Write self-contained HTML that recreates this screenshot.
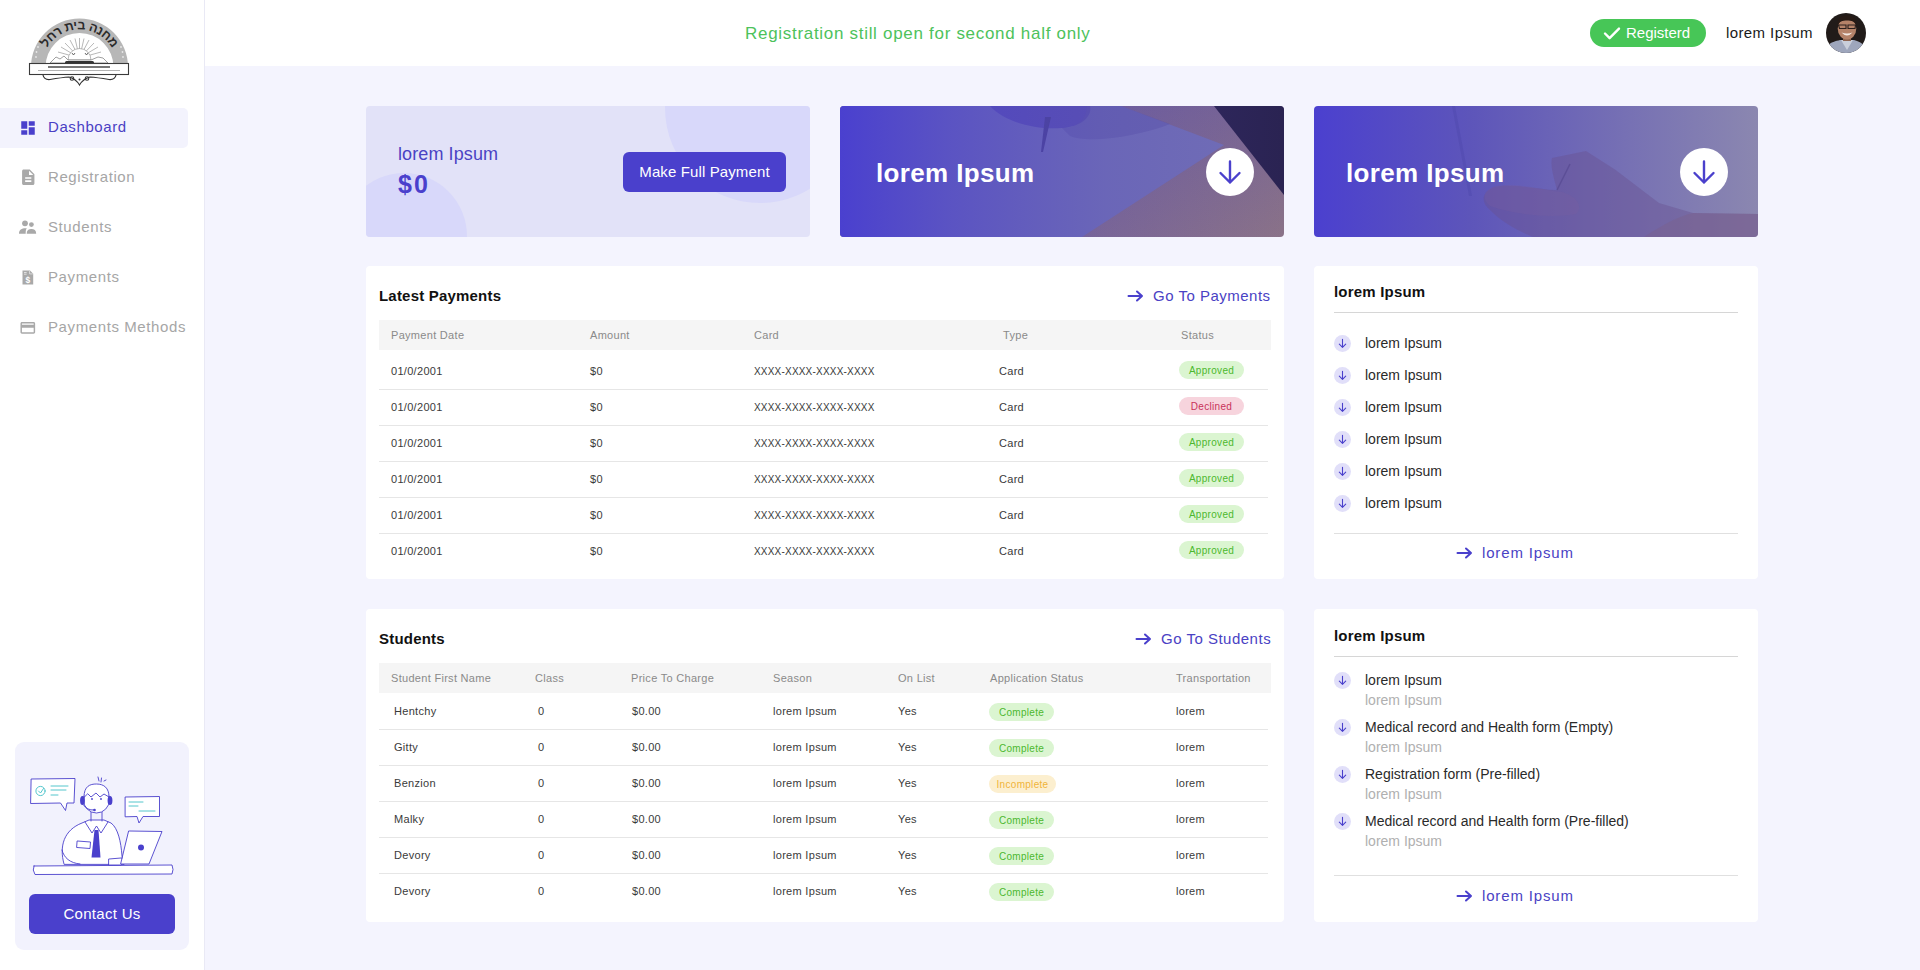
<!DOCTYPE html>
<html><head><meta charset="utf-8">
<style>
*{margin:0;padding:0;box-sizing:border-box}
html,body{width:1920px;height:970px;overflow:hidden}
body{background:#f4f4fe;font-family:"Liberation Sans",sans-serif;position:relative;color:#333}
.a{position:absolute}
.t{position:absolute;white-space:nowrap;line-height:20px;height:20px}
#side{left:0;top:0;width:205px;height:970px;background:#fff;border-right:1px solid #e9e9f5}
#hdr{left:205px;top:0;width:1715px;height:66px;background:#fff}
.nav{left:48px;font-size:15px;color:#a6a6a6;letter-spacing:.6px}
.card{position:absolute;background:#fff;border-radius:4px}
.th{position:absolute;background:#f5f5f5}
.hd{font-size:11px;color:#8a8a8a;letter-spacing:.3px}
.td{font-size:11px;color:#3a3a3a;letter-spacing:.3px}
.dv{position:absolute;height:1px;background:#e6e6e6}
.bdg{position:absolute;height:18px;border-radius:9px;font-size:10px;line-height:20px;text-align:center;letter-spacing:.3px}
.ok{background:#dbf5d1;color:#4cb82e}
.no{background:#f7d4dd;color:#c8325a}
.inc{background:#fcefcf;color:#f0b43a}
.ttl{font-size:15px;font-weight:700;color:#111;letter-spacing:.2px}
.lnk{font-size:15px;color:#4a42c4;letter-spacing:.5px}
.li{font-size:14px;color:#2a2a2a}
.sub{font-size:14px;color:#b0b0b0}
.ic{position:absolute;width:17px;height:17px;border-radius:50%;background:#e1dff9}
</style></head><body>

<div id="side" class="a"></div>
<div id="hdr" class="a"></div>

<!-- logo -->
<svg class="a" style="left:0;top:0" width="205" height="100" viewBox="0 0 205 100">
  <defs><path id="arcp" d="M41.5 67.5 A38 38 0 0 1 117.5 67.5"/></defs>
  <path d="M31 67 A48.5 48.5 0 0 1 128 67 L113.5 67 A34 34 0 0 0 45.5 67 Z" fill="#b7b7b7"/>
  <g fill="#e8e8e8"><circle cx="38" cy="47" r=".9"/><circle cx="36.5" cy="52" r=".9"/><circle cx="36" cy="57" r=".9"/><circle cx="121" cy="47" r=".9"/><circle cx="122.5" cy="52" r=".9"/><circle cx="123" cy="57" r=".9"/></g>
  <g stroke="#9a9a9a" stroke-width=".7">
    <line x1="79.5" y1="58" x2="79.5" y2="38"/><line x1="79.5" y1="58" x2="75" y2="38.5"/><line x1="79.5" y1="58" x2="84" y2="38.5"/><line x1="79.5" y1="58" x2="70" y2="40"/><line x1="79.5" y1="58" x2="89" y2="40"/>
    <line x1="79.5" y1="58" x2="65" y2="43"/><line x1="79.5" y1="58" x2="94" y2="43"/><line x1="79.5" y1="58" x2="61" y2="47"/><line x1="79.5" y1="58" x2="98" y2="47"/><line x1="79.5" y1="58" x2="58" y2="52"/><line x1="79.5" y1="58" x2="101" y2="52"/>
  </g>
  <path d="M68 60 A11.5 11.5 0 0 1 91 60 Z" fill="#fff" stroke="#888" stroke-width=".6"/>
  <path d="M50 63 L56 57 L60 59 L64 56 L68 60 L91 60 L98 57 L103 58 L108 63 Z" fill="#fff" stroke="#777" stroke-width=".7"/>
  <path d="M72 53 l1.5 2 l1.5 -2 M85 53 l1.5 2 l1.5 -2" stroke="#444" stroke-width=".8" fill="none"/>
  <rect x="65" y="61" width="29" height="3.5" rx="1.5" fill="#333"/>
  <text font-family="Liberation Sans" font-weight="700" font-size="12.5" letter-spacing="-.3" fill="#2b2b2b" direction="rtl"><textPath href="#arcp" startOffset="50%" text-anchor="middle">מחנה בית רחל</textPath></text>
  <rect x="29.5" y="63.5" width="99" height="11" fill="#fff" stroke="#3a3a3a" stroke-width="1.1"/>
  <rect x="48" y="66.2" width="62" height="1.6" fill="#555"/>
  <rect x="38" y="70" width="82" height=".9" fill="#aaa"/>
  <path d="M43 75 Q44 80 50 79.5 Q62 77.5 69 77 Q76 79 79.5 85 Q83 79 90 77 Q97 77.5 109 79.5 Q115 80 116 75" fill="none" stroke="#333" stroke-width="1.2"/>
  <circle cx="72" cy="78.5" r="1.8" fill="none" stroke="#333" stroke-width="1.1"/><circle cx="87" cy="78.5" r="1.8" fill="none" stroke="#333" stroke-width="1.1"/>
  <circle cx="79.5" cy="79.5" r="1" fill="#333"/>
</svg>

<!-- nav -->
<div class="a" style="left:0;top:108px;width:188px;height:40px;background:#f3f3fd;border-radius:0 5px 5px 0"></div>
<svg class="a" style="left:18.75px;top:118.75px" width="18" height="18" viewBox="0 0 24 24"><path fill="#4a40cc" d="M3 13h8V3H3v10zm0 8h8v-6H3v6zm10 0h8V11h-8v10zm0-18v6h8V3h-8z"/></svg>
<svg class="a" style="left:18.9px;top:167.8px" width="18.5" height="18.5" viewBox="0 0 24 24"><path fill="#a9a9a9" d="M14 2H6c-1.1 0-1.99.9-1.99 2L4 20c0 1.1.89 2 1.99 2H18c1.1 0 2-.9 2-2V8l-6-6zm2 16H8v-2h8v2zm0-4H8v-2h8v2zm-3-5V3.5L18.5 9H13z"/></svg>
<svg class="a" style="left:19px;top:219px" width="18" height="16" viewBox="0 0 18 16"><circle cx="6" cy="4.3" r="2.9" fill="#a9a9a9"/><circle cx="12.4" cy="5.6" r="2.4" fill="#a9a9a9"/><path d="M0 14.7 C0 11 2.5 9.3 6.8 9.3 L7.8 9.3 C6.8 10.6 6.7 12.5 6.7 14.7 Z" fill="#a9a9a9"/><path d="M7.7 14.7 C7.7 11.5 9.6 10.1 12.4 10.1 C15.2 10.1 17.2 11.5 17.2 14.7 Z" fill="#a9a9a9"/></svg>
<svg class="a" style="left:22px;top:269.5px" width="12" height="15" viewBox="0 0 12 15"><path d="M0.5 0.5 H8 L11.2 3.7 V14.5 H0.5 Z" fill="#a9a9a9"/><rect x="2" y="2" width="2.6" height="0.9" fill="#e6e6e6"/><rect x="2" y="3.7" width="2.6" height="0.9" fill="#e6e6e6"/><path d="M7.6 0.8 V3.9 H10.9" fill="none" stroke="#e6e6e6" stroke-width=".8"/><text x="5.8" y="12.6" font-family="Liberation Sans" font-weight="700" font-size="8.5" fill="#fff" text-anchor="middle">$</text></svg>
<svg class="a" style="left:18.5px;top:318.8px" width="17.6" height="17.6" viewBox="0 0 24 24"><path fill="#a9a9a9" d="M20 4H4c-1.11 0-1.99.89-1.99 2L2 18c0 1.11.89 2 2 2h16c1.11 0 2-.89 2-2V6c0-1.11-.89-2-2-2zm0 14H4v-6h16v6zm0-10H4V6h16v2z"/></svg>
<div class="t nav" style="top:117px;color:#4a40c4">Dashboard</div>
<div class="t nav" style="top:167px">Registration</div>
<div class="t nav" style="top:217px">Students</div>
<div class="t nav" style="top:267px">Payments</div>
<div class="t nav" style="top:317px">Payments Methods</div>

<!-- contact -->
<div class="a" style="left:15px;top:742px;width:174px;height:208px;background:#f2f2fd;border-radius:9px"></div>
<svg class="a" style="left:15px;top:742px" width="174" height="150" viewBox="15 742 174 150">
  <g fill="none" stroke="#4a40cc" stroke-width=".9" stroke-linejoin="round" stroke-linecap="round">
    <path d="M31.5 779 L75 778.5 L74 803 L67 803 L65.5 810.5 L60.5 803 L31 803.5 Z" fill="#fff"/>
    <path d="M125.5 797 L159.5 796.5 L159.5 816.5 L143 816.5 L139 823 L137 816.5 L125.5 816.8 Z" fill="#fff"/>
    <path d="M34 866 L172 865 Q174 869.5 172 874 L35 874.5 Q32 870 34 866 Z" fill="#fff"/>
    <path d="M64 864 C59 846 64 830 82 823 L89 820 L104 820 L111 823 C118 828 121 842 122 856 L124 864 Z" fill="#fff"/><path d="M91 811 L91 821 M102 811 L102 821"/>
    <path d="M85 822 L92 833 L96.5 826 L101 833 L108 822" fill="#fff"/>
    <path d="M77.5 841 L90.5 842 L90 848.5 L77 847.5 Z" fill="#fff"/><path d="M62 850 C64 858 70 863 80 864"/>
    <path d="M109 859 L121 858 C124 858 125 863 121 865 L109 865 Z" fill="#fff"/>
    <path d="M129 831 L162 831.5 L149 864 L121 864 Z" fill="#fff"/>
    <circle cx="96.5" cy="800" r="13" fill="#fff"/>
    <path d="M84 797 C84 786 90 784 96.5 784 C104 784 109 788 109 797 L104 794 L100 797 L96 793 L91 797 L88 794 Z" fill="#fff"/>
    <path d="M83.5 805 Q87 810.5 94 810"/>
    <line x1="98" y1="777" x2="99" y2="781"/><line x1="101.5" y1="778" x2="101" y2="782"/><line x1="104" y1="781" x2="106" y2="780"/>
  </g>
  <g stroke="#42c0c6" stroke-width=".9" fill="none" stroke-linecap="round">
    <circle cx="40.5" cy="791" r="4.6"/><path d="M38.5 791 L40.5 793 L43.5 788.5"/>
    <line x1="51" y1="786" x2="68" y2="786"/><line x1="51" y1="790" x2="66" y2="790"/><line x1="51" y1="795" x2="58" y2="795"/>
    <line x1="129" y1="802" x2="143" y2="802"/><line x1="129" y1="806" x2="138" y2="806"/><line x1="139" y1="811" x2="155" y2="811"/>
  </g>
  <path d="M94.5 830 L98.5 830 L100.5 857.5 L91.5 857.5 Z" fill="#4a40cc"/>
  <ellipse cx="82.5" cy="800.5" rx="2.4" ry="4.5" fill="#4a40cc"/><ellipse cx="110" cy="800.5" rx="2.4" ry="4.5" fill="#4a40cc"/>
  <circle cx="141" cy="847.5" r="3" fill="#4a40cc"/><circle cx="94.5" cy="810" r="1.3" fill="#4a40cc"/>
  <circle cx="92" cy="799" r=".9" fill="#4a40cc"/><circle cx="101" cy="799" r=".9" fill="#4a40cc"/>
</svg>
<div class="a" style="left:29px;top:894px;width:146px;height:40px;background:#4a40cc;border-radius:6px;color:#fff;font-size:15px;line-height:40px;text-align:center;letter-spacing:.3px">Contact Us</div>

<!-- header -->
<div class="t" style="left:745px;top:24px;font-size:17px;color:#4dc25b;letter-spacing:.7px">Registration still open for second half only</div>
<div class="a" style="left:1590px;top:19px;width:116px;height:28px;border-radius:14px;background:#47c657"></div>
<svg class="a" style="left:1603px;top:26px" width="18" height="15" viewBox="0 0 18 15"><path d="M2 7.5 L6.6 12.2 L16 2.6" fill="none" stroke="#fff" stroke-width="2.4" stroke-linecap="round" stroke-linejoin="round"/></svg>
<div class="t" style="left:1626px;top:23px;font-size:15px;color:#fff">Registerd</div>
<div class="t" style="left:1726px;top:23px;font-size:15px;color:#1a1a1a;letter-spacing:.4px">lorem Ipsum</div>
<svg class="a" style="left:1826px;top:13px" width="40" height="40" viewBox="0 0 40 40">
  <defs><clipPath id="av"><circle cx="20" cy="20" r="20"/></clipPath></defs>
  <g clip-path="url(#av)">
    <rect width="40" height="40" fill="#211b19"/>
    <path d="M0 40 L1 33 C5 29 10 28 14 27 L28 27 C32 28 36 30 39 33 L40 40 Z" fill="#9ea6bc"/>
    <path d="M15 27 L21 37 L27 27 Z" fill="#c9ceda"/>
    <rect x="17" y="21" width="8" height="7" fill="#8e6450"/>
    <ellipse cx="21" cy="15.5" rx="9.3" ry="11" fill="#b48268"/>
    <path d="M11.5 13 C11 5 15 2.5 21 2.5 C27 2.5 31 5 30.5 13 C29 8.5 25.5 7.5 21 7.5 C16.5 7.5 13 8.5 11.5 13 Z" fill="#261a15"/>
    <path d="M12.5 12 H20 V15.5 H13.5 Z M22 12 H29.5 L29 15.5 H22 Z" fill="none" stroke="#2a1f1c" stroke-width="1.1"/>
    <path d="M15.5 19.5 Q21 25.5 26.5 19.5 Q21 21.5 15.5 19.5 Z" fill="#f2e8e2"/>
  </g>
</svg>

<!-- top cards -->
<div class="a" style="left:366px;top:106px;width:444px;height:131px;background:#e2e2f8;border-radius:4px;overflow:hidden">
  <div class="a" style="left:-25px;top:67px;width:126px;height:126px;border-radius:50%;background:#d8d8fa"></div>
  <div class="a" style="left:299px;top:-93px;width:190px;height:190px;border-radius:50%;background:#d8d8fa"></div>
</div>
<div class="t" style="left:398px;top:144px;font-size:18px;color:#4a42c4;letter-spacing:.1px">lorem Ipsum</div>
<div class="t" style="left:398px;top:172px;font-size:25px;line-height:24px;height:24px;font-weight:700;color:#4a40cc;letter-spacing:2px">$0</div>
<div class="a" style="left:623px;top:152px;width:163px;height:40px;background:#4a40cc;border-radius:6px;color:#fff;font-size:15px;line-height:40px;text-align:center;letter-spacing:.12px">Make Full Payment</div>

<div class="a" style="left:840px;top:106px;width:444px;height:131px;border-radius:4px;overflow:hidden">
<svg width="444" height="131" viewBox="0 0 444 131" style="display:block">
  <defs>
    <linearGradient id="gB" x1="0" x2="1" y1="0" y2="0"><stop offset="0" stop-color="#4a40cf" stop-opacity="1"/><stop offset=".25" stop-color="#4c42cc" stop-opacity=".6"/><stop offset=".6" stop-color="#5046c4" stop-opacity=".2"/><stop offset="1" stop-color="#5548c0" stop-opacity="0"/></linearGradient>
    <linearGradient id="tB" x1="0" x2="1" y1="0" y2="1"><stop offset="0" stop-color="#6a5a9c"/><stop offset="1" stop-color="#8a7288"/></linearGradient>
  </defs>
  <rect width="444" height="131" fill="url(#tB)"/>
  <path d="M0 0 H281 L384 39 L242 131 H0 Z" fill="#716eb5"/>
  <path d="M374 0 H444 V89 Z" fill="#2a2352"/>
  <path d="M150 0 C165 16 195 24 222 22 C245 20 252 8 250 0 Z" fill="#5a50b0"/><path d="M222 22 C240 22 248 10 246 0 L281 0 L330 18 C300 30 250 38 230 30 Z" fill="#5d55a8" opacity=".5"/>
  <path d="M205 11 L211 11 L203 46 L201 46 Z" fill="#4a4290"/>
  <rect width="444" height="131" fill="url(#gB)"/>
</svg></div>
<div class="t" style="left:876px;top:158px;font-size:26px;line-height:30px;height:30px;font-weight:700;color:#fff;letter-spacing:.35px">lorem Ipsum</div>
<svg class="a" style="left:1206px;top:148px" width="48" height="48" viewBox="0 0 48 48"><circle cx="24" cy="24" r="24" fill="#fff"/><path d="M24 13.5 V34.5 M14.5 25 L24 34.5 L33.5 25" fill="none" stroke="#4a40cc" stroke-width="2.4" stroke-linecap="round" stroke-linejoin="round"/></svg>

<div class="a" style="left:1314px;top:106px;width:444px;height:131px;border-radius:4px;overflow:hidden">
<svg width="444" height="131" viewBox="0 0 444 131" style="display:block">
  <defs>
    <linearGradient id="gC" x1="0" x2="1" y1="0" y2="0"><stop offset="0" stop-color="#4b40cf"/><stop offset=".35" stop-color="#5d55ba"/><stop offset=".7" stop-color="#7670b4"/><stop offset="1" stop-color="#8b87b0"/></linearGradient>
  </defs>
  <rect width="444" height="131" fill="url(#gC)"/>
  <path d="M138 0 L141 0 L158 90 L155 90 Z" fill="#4b44a8" opacity=".35"/>
  <path d="M238 52 L272 45 L301 63.5 L345 97 L379 107 L444 108 V131 H219 C205 125 190 118 176 104 C166 96 168 86 180 81 C200 77 225 84 243 84 C240 72 236 60 238 52 Z" fill="#6a5090" opacity=".42"/>
  <path d="M176 100 C168 94 168 84 182 80 C205 76 228 84 248 86 C262 90 270 100 262 108 C240 112 205 110 176 100 Z" fill="#7a5fa0" opacity=".25"/>
  <path d="M243 84 L256 58" stroke="#4d3f88" stroke-width="1.6" opacity=".45"/>
  <path d="M379 107 L444 108 V131 H330 C350 118 365 110 379 107 Z" fill="#7e5c80" opacity=".3"/>
</svg></div>
<div class="t" style="left:1346px;top:158px;font-size:26px;line-height:30px;height:30px;font-weight:700;color:#fff;letter-spacing:.35px">lorem Ipsum</div>
<svg class="a" style="left:1680px;top:148px" width="48" height="48" viewBox="0 0 48 48"><circle cx="24" cy="24" r="24" fill="#fff"/><path d="M24 13.5 V34.5 M14.5 25 L24 34.5 L33.5 25" fill="none" stroke="#4a40cc" stroke-width="2.4" stroke-linecap="round" stroke-linejoin="round"/></svg>

<!-- payments card -->
<div class="card" style="left:366px;top:266px;width:918px;height:313px"></div>
<div class="t ttl" style="left:379px;top:286px">Latest Payments</div>
<svg class="a" style="left:1127px;top:290px" width="17" height="12" viewBox="0 0 17 12"><path d="M1.5 6 H15 M10 1.5 L15 6 L10 10.5" fill="none" stroke="#4a40cc" stroke-width="2" stroke-linecap="round" stroke-linejoin="round"/></svg>
<div class="t lnk" style="left:1153px;top:286px">Go To Payments</div>
<div class="th" style="left:379px;top:320px;width:892px;height:30px"></div>
<div class="t hd" style="left:391px;top:325px">Payment Date</div>
<div class="t hd" style="left:590px;top:325px">Amount</div>
<div class="t hd" style="left:754px;top:325px">Card</div>
<div class="t hd" style="left:1003px;top:325px">Type</div>
<div class="t hd" style="left:1181px;top:325px">Status</div>
<div class="t td" style="left:391px;top:361px">01/0/2001</div>
<div class="t td" style="left:590px;top:361px">$0</div>
<div class="t td" style="left:754px;top:362px;font-size:10px;letter-spacing:.2px">XXXX-XXXX-XXXX-XXXX</div>
<div class="t td" style="left:999px;top:361px">Card</div>
<div class="bdg ok" style="left:1179px;top:361px;width:65px">Approved</div>
<div class="dv" style="left:379px;top:389px;width:889px"></div>
<div class="t td" style="left:391px;top:397px">01/0/2001</div>
<div class="t td" style="left:590px;top:397px">$0</div>
<div class="t td" style="left:754px;top:398px;font-size:10px;letter-spacing:.2px">XXXX-XXXX-XXXX-XXXX</div>
<div class="t td" style="left:999px;top:397px">Card</div>
<div class="bdg no" style="left:1179px;top:397px;width:65px">Declined</div>
<div class="dv" style="left:379px;top:425px;width:889px"></div>
<div class="t td" style="left:391px;top:433px">01/0/2001</div>
<div class="t td" style="left:590px;top:433px">$0</div>
<div class="t td" style="left:754px;top:434px;font-size:10px;letter-spacing:.2px">XXXX-XXXX-XXXX-XXXX</div>
<div class="t td" style="left:999px;top:433px">Card</div>
<div class="bdg ok" style="left:1179px;top:433px;width:65px">Approved</div>
<div class="dv" style="left:379px;top:461px;width:889px"></div>
<div class="t td" style="left:391px;top:469px">01/0/2001</div>
<div class="t td" style="left:590px;top:469px">$0</div>
<div class="t td" style="left:754px;top:470px;font-size:10px;letter-spacing:.2px">XXXX-XXXX-XXXX-XXXX</div>
<div class="t td" style="left:999px;top:469px">Card</div>
<div class="bdg ok" style="left:1179px;top:469px;width:65px">Approved</div>
<div class="dv" style="left:379px;top:497px;width:889px"></div>
<div class="t td" style="left:391px;top:505px">01/0/2001</div>
<div class="t td" style="left:590px;top:505px">$0</div>
<div class="t td" style="left:754px;top:506px;font-size:10px;letter-spacing:.2px">XXXX-XXXX-XXXX-XXXX</div>
<div class="t td" style="left:999px;top:505px">Card</div>
<div class="bdg ok" style="left:1179px;top:505px;width:65px">Approved</div>
<div class="dv" style="left:379px;top:533px;width:889px"></div>
<div class="t td" style="left:391px;top:541px">01/0/2001</div>
<div class="t td" style="left:590px;top:541px">$0</div>
<div class="t td" style="left:754px;top:542px;font-size:10px;letter-spacing:.2px">XXXX-XXXX-XXXX-XXXX</div>
<div class="t td" style="left:999px;top:541px">Card</div>
<div class="bdg ok" style="left:1179px;top:541px;width:65px">Approved</div>

<!-- right card 1 -->
<div class="card" style="left:1314px;top:266px;width:444px;height:313px"></div>
<div class="t ttl" style="left:1334px;top:282px">lorem Ipsum</div>
<div class="dv" style="left:1334px;top:312px;width:404px;background:#d6d6d6"></div>
<svg class="a" style="left:1334px;top:334.5px" width="17" height="17" viewBox="0 0 17 17"><circle cx="8.5" cy="8.5" r="8.5" fill="#e1dff9"/><path d="M8.5 4.3 V12.3 M5.3 9.2 L8.5 12.3 L11.7 9.2" fill="none" stroke="#4a40cc" stroke-width="1.1" stroke-linecap="round" stroke-linejoin="round"/></svg>
<div class="t li" style="left:1365px;top:333px">lorem Ipsum</div>
<svg class="a" style="left:1334px;top:366.5px" width="17" height="17" viewBox="0 0 17 17"><circle cx="8.5" cy="8.5" r="8.5" fill="#e1dff9"/><path d="M8.5 4.3 V12.3 M5.3 9.2 L8.5 12.3 L11.7 9.2" fill="none" stroke="#4a40cc" stroke-width="1.1" stroke-linecap="round" stroke-linejoin="round"/></svg>
<div class="t li" style="left:1365px;top:365px">lorem Ipsum</div>
<svg class="a" style="left:1334px;top:398.5px" width="17" height="17" viewBox="0 0 17 17"><circle cx="8.5" cy="8.5" r="8.5" fill="#e1dff9"/><path d="M8.5 4.3 V12.3 M5.3 9.2 L8.5 12.3 L11.7 9.2" fill="none" stroke="#4a40cc" stroke-width="1.1" stroke-linecap="round" stroke-linejoin="round"/></svg>
<div class="t li" style="left:1365px;top:397px">lorem Ipsum</div>
<svg class="a" style="left:1334px;top:430.5px" width="17" height="17" viewBox="0 0 17 17"><circle cx="8.5" cy="8.5" r="8.5" fill="#e1dff9"/><path d="M8.5 4.3 V12.3 M5.3 9.2 L8.5 12.3 L11.7 9.2" fill="none" stroke="#4a40cc" stroke-width="1.1" stroke-linecap="round" stroke-linejoin="round"/></svg>
<div class="t li" style="left:1365px;top:429px">lorem Ipsum</div>
<svg class="a" style="left:1334px;top:462.5px" width="17" height="17" viewBox="0 0 17 17"><circle cx="8.5" cy="8.5" r="8.5" fill="#e1dff9"/><path d="M8.5 4.3 V12.3 M5.3 9.2 L8.5 12.3 L11.7 9.2" fill="none" stroke="#4a40cc" stroke-width="1.1" stroke-linecap="round" stroke-linejoin="round"/></svg>
<div class="t li" style="left:1365px;top:461px">lorem Ipsum</div>
<svg class="a" style="left:1334px;top:494.5px" width="17" height="17" viewBox="0 0 17 17"><circle cx="8.5" cy="8.5" r="8.5" fill="#e1dff9"/><path d="M8.5 4.3 V12.3 M5.3 9.2 L8.5 12.3 L11.7 9.2" fill="none" stroke="#4a40cc" stroke-width="1.1" stroke-linecap="round" stroke-linejoin="round"/></svg>
<div class="t li" style="left:1365px;top:493px">lorem Ipsum</div>
<div class="dv" style="left:1334px;top:533px;width:404px;background:#e0e0e0"></div>
<svg class="a" style="left:1456px;top:547px" width="17" height="12" viewBox="0 0 17 12"><path d="M1.5 6 H15 M10 1.5 L15 6 L10 10.5" fill="none" stroke="#4a40cc" stroke-width="2" stroke-linecap="round" stroke-linejoin="round"/></svg>
<div class="t lnk" style="left:1482px;top:543px;letter-spacing:.85px">lorem Ipsum</div>

<!-- students card -->
<div class="card" style="left:366px;top:609px;width:918px;height:313px"></div>
<div class="t ttl" style="left:379px;top:629px">Students</div>
<svg class="a" style="left:1135px;top:633px" width="17" height="12" viewBox="0 0 17 12"><path d="M1.5 6 H15 M10 1.5 L15 6 L10 10.5" fill="none" stroke="#4a40cc" stroke-width="2" stroke-linecap="round" stroke-linejoin="round"/></svg>
<div class="t lnk" style="left:1161px;top:629px">Go To Students</div>
<div class="th" style="left:379px;top:663px;width:892px;height:30px"></div>
<div class="t hd" style="left:391px;top:668px">Student First Name</div>
<div class="t hd" style="left:535px;top:668px">Class</div>
<div class="t hd" style="left:631px;top:668px">Price To Charge</div>
<div class="t hd" style="left:773px;top:668px">Season</div>
<div class="t hd" style="left:898px;top:668px">On List</div>
<div class="t hd" style="left:990px;top:668px">Application Status</div>
<div class="t hd" style="left:1176px;top:668px">Transportation</div>
<div class="t td" style="left:394px;top:701px">Hentchy</div>
<div class="t td" style="left:538px;top:701px">0</div>
<div class="t td" style="left:632px;top:701px">$0.00</div>
<div class="t td" style="left:773px;top:701px">lorem Ipsum</div>
<div class="t td" style="left:898px;top:701px">Yes</div>
<div class="bdg ok" style="left:989px;top:703px;width:65px">Complete</div>
<div class="t td" style="left:1176px;top:701px">lorem</div>
<div class="dv" style="left:379px;top:729px;width:889px"></div>
<div class="t td" style="left:394px;top:737px">Gitty</div>
<div class="t td" style="left:538px;top:737px">0</div>
<div class="t td" style="left:632px;top:737px">$0.00</div>
<div class="t td" style="left:773px;top:737px">lorem Ipsum</div>
<div class="t td" style="left:898px;top:737px">Yes</div>
<div class="bdg ok" style="left:989px;top:739px;width:65px">Complete</div>
<div class="t td" style="left:1176px;top:737px">lorem</div>
<div class="dv" style="left:379px;top:765px;width:889px"></div>
<div class="t td" style="left:394px;top:773px">Benzion</div>
<div class="t td" style="left:538px;top:773px">0</div>
<div class="t td" style="left:632px;top:773px">$0.00</div>
<div class="t td" style="left:773px;top:773px">lorem Ipsum</div>
<div class="t td" style="left:898px;top:773px">Yes</div>
<div class="bdg inc" style="left:989px;top:775px;width:67px">Incomplete</div>
<div class="t td" style="left:1176px;top:773px">lorem</div>
<div class="dv" style="left:379px;top:801px;width:889px"></div>
<div class="t td" style="left:394px;top:809px">Malky</div>
<div class="t td" style="left:538px;top:809px">0</div>
<div class="t td" style="left:632px;top:809px">$0.00</div>
<div class="t td" style="left:773px;top:809px">lorem Ipsum</div>
<div class="t td" style="left:898px;top:809px">Yes</div>
<div class="bdg ok" style="left:989px;top:811px;width:65px">Complete</div>
<div class="t td" style="left:1176px;top:809px">lorem</div>
<div class="dv" style="left:379px;top:837px;width:889px"></div>
<div class="t td" style="left:394px;top:845px">Devory</div>
<div class="t td" style="left:538px;top:845px">0</div>
<div class="t td" style="left:632px;top:845px">$0.00</div>
<div class="t td" style="left:773px;top:845px">lorem Ipsum</div>
<div class="t td" style="left:898px;top:845px">Yes</div>
<div class="bdg ok" style="left:989px;top:847px;width:65px">Complete</div>
<div class="t td" style="left:1176px;top:845px">lorem</div>
<div class="dv" style="left:379px;top:873px;width:889px"></div>
<div class="t td" style="left:394px;top:881px">Devory</div>
<div class="t td" style="left:538px;top:881px">0</div>
<div class="t td" style="left:632px;top:881px">$0.00</div>
<div class="t td" style="left:773px;top:881px">lorem Ipsum</div>
<div class="t td" style="left:898px;top:881px">Yes</div>
<div class="bdg ok" style="left:989px;top:883px;width:65px">Complete</div>
<div class="t td" style="left:1176px;top:881px">lorem</div>

<!-- right card 2 -->
<div class="card" style="left:1314px;top:609px;width:444px;height:313px"></div>
<div class="t ttl" style="left:1334px;top:626px">lorem Ipsum</div>
<div class="dv" style="left:1334px;top:656px;width:404px;background:#d6d6d6"></div>
<svg class="a" style="left:1334px;top:671.5px" width="17" height="17" viewBox="0 0 17 17"><circle cx="8.5" cy="8.5" r="8.5" fill="#e1dff9"/><path d="M8.5 4.3 V12.3 M5.3 9.2 L8.5 12.3 L11.7 9.2" fill="none" stroke="#4a40cc" stroke-width="1.1" stroke-linecap="round" stroke-linejoin="round"/></svg>
<div class="t li" style="left:1365px;top:670px">lorem Ipsum</div>
<div class="t sub" style="left:1365px;top:690px">lorem Ipsum</div>
<svg class="a" style="left:1334px;top:718.5px" width="17" height="17" viewBox="0 0 17 17"><circle cx="8.5" cy="8.5" r="8.5" fill="#e1dff9"/><path d="M8.5 4.3 V12.3 M5.3 9.2 L8.5 12.3 L11.7 9.2" fill="none" stroke="#4a40cc" stroke-width="1.1" stroke-linecap="round" stroke-linejoin="round"/></svg>
<div class="t li" style="left:1365px;top:717px">Medical record and Health form (Empty)</div>
<div class="t sub" style="left:1365px;top:737px">lorem Ipsum</div>
<svg class="a" style="left:1334px;top:765.5px" width="17" height="17" viewBox="0 0 17 17"><circle cx="8.5" cy="8.5" r="8.5" fill="#e1dff9"/><path d="M8.5 4.3 V12.3 M5.3 9.2 L8.5 12.3 L11.7 9.2" fill="none" stroke="#4a40cc" stroke-width="1.1" stroke-linecap="round" stroke-linejoin="round"/></svg>
<div class="t li" style="left:1365px;top:764px">Registration form (Pre-filled)</div>
<div class="t sub" style="left:1365px;top:784px">lorem Ipsum</div>
<svg class="a" style="left:1334px;top:812.5px" width="17" height="17" viewBox="0 0 17 17"><circle cx="8.5" cy="8.5" r="8.5" fill="#e1dff9"/><path d="M8.5 4.3 V12.3 M5.3 9.2 L8.5 12.3 L11.7 9.2" fill="none" stroke="#4a40cc" stroke-width="1.1" stroke-linecap="round" stroke-linejoin="round"/></svg>
<div class="t li" style="left:1365px;top:811px">Medical record and Health form (Pre-filled)</div>
<div class="t sub" style="left:1365px;top:831px">lorem Ipsum</div>
<div class="dv" style="left:1334px;top:875px;width:404px;background:#e0e0e0"></div>
<svg class="a" style="left:1456px;top:890px" width="17" height="12" viewBox="0 0 17 12"><path d="M1.5 6 H15 M10 1.5 L15 6 L10 10.5" fill="none" stroke="#4a40cc" stroke-width="2" stroke-linecap="round" stroke-linejoin="round"/></svg>
<div class="t lnk" style="left:1482px;top:886px;letter-spacing:.85px">lorem Ipsum</div>

</body></html>
